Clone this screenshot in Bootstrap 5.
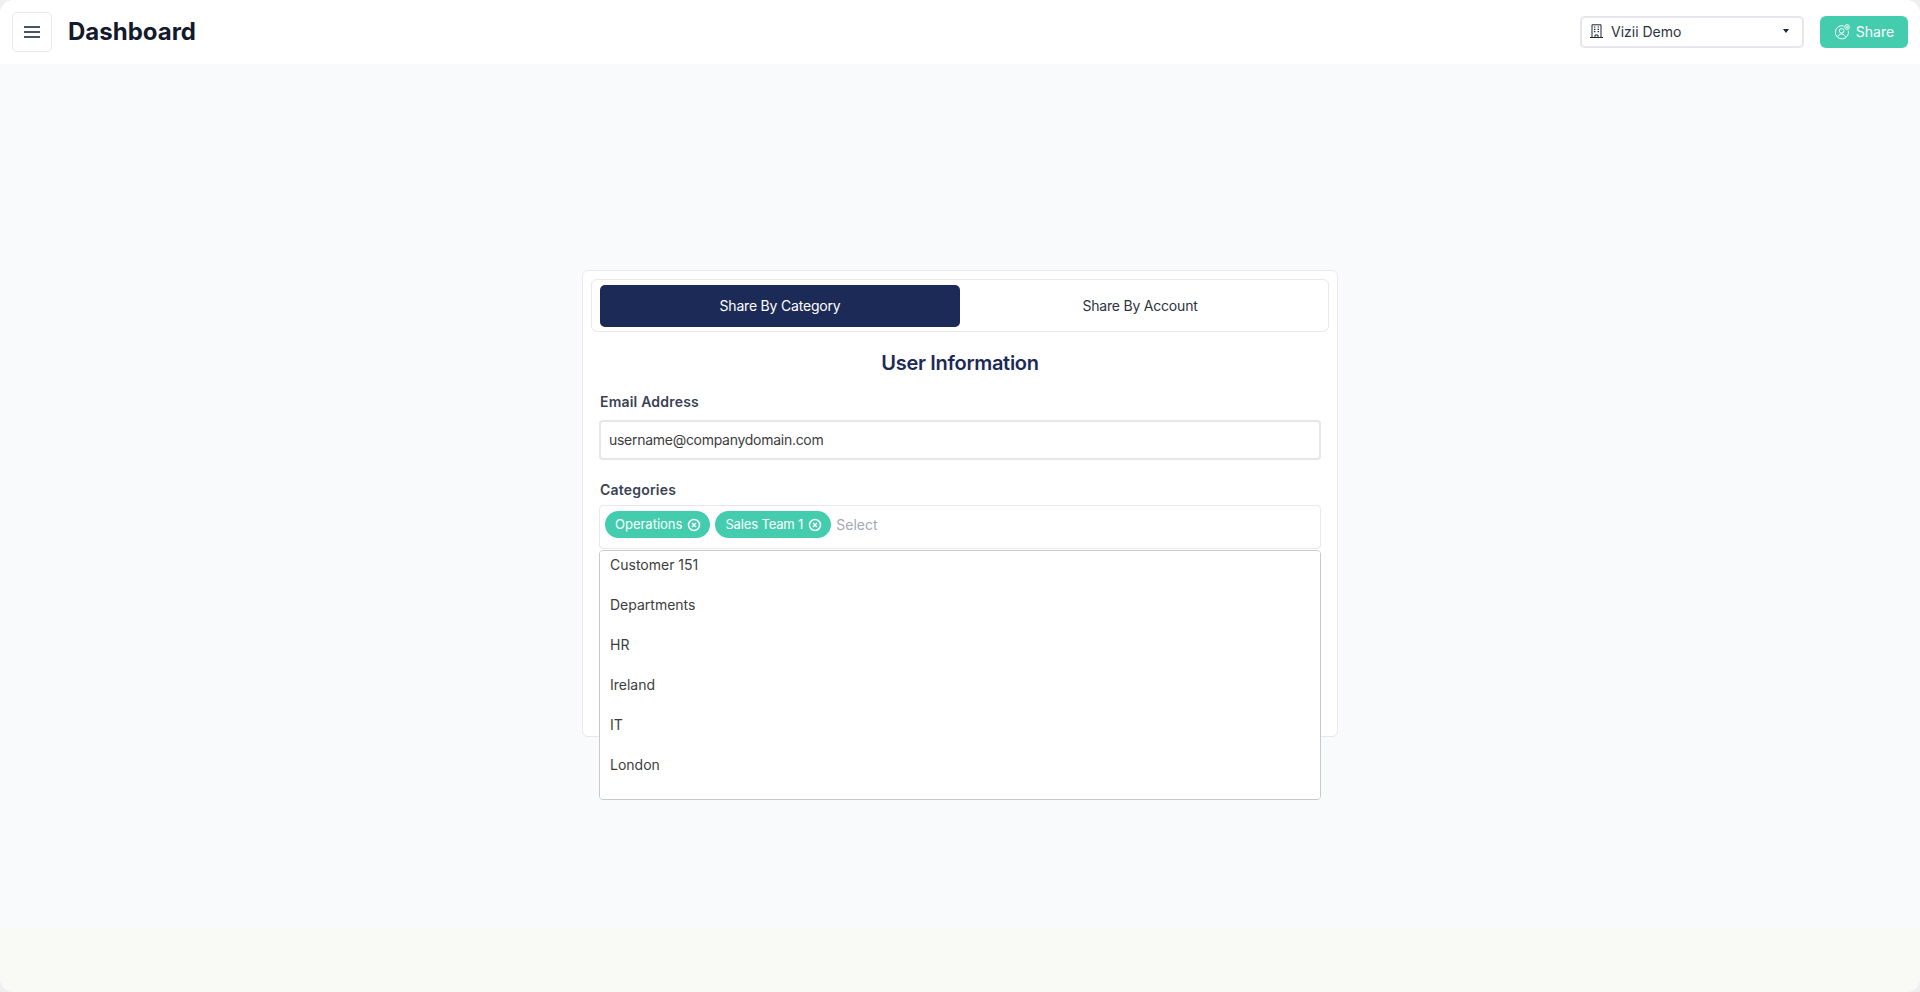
<!DOCTYPE html>
<html lang="en">
  <head>
    <meta charset="UTF-8" />
    <meta name="viewport" content="width=device-width, initial-scale=1.0" />
    <title>Dashboard</title>
    <link
      href="https://cdn.jsdelivr.net/npm/bootstrap@5.3.0/dist/css/bootstrap.min.css"
      rel="stylesheet"
    />
    <style>
      html,
      body {
        height: 100%;
        background: #efeff1;
      }

      body {
        font-family: Inter, "Liberation Sans", sans-serif;
        font-size: 14px;
        color: #2d3342;
        overflow: hidden;
      }

      .app-shell {
        height: 992px;
        border-radius: 14px;
        overflow: hidden;
        background: #f9fafc;
      }

      .top-bar {
        height: 64px;
        padding: 0 12px;
        background: #fff;
      }

      .menu-btn {
        width: 40px;
        height: 40px;
        padding: 0;
        border: 1px solid #e9e9ee;
        border-radius: 4px;
        background: #fff;
      }

      .page-title {
        margin: 0 0 0 16px;
        font-size: 24px;
        line-height: 32px;
        font-weight: 700;
        color: #131a2b;
      }

      .org-select {
        width: 224px;
        height: 32px;
        padding: 0 13px 2px 8px;
        border: 2px solid #e6e6ec;
        border-radius: 5px;
        background: #fff;
        color: #2d3342;
      }

      .org-select .org-name {
        margin-left: 8px;
      }

      .caret-down {
        width: 0;
        height: 0;
        border-left: 3.5px solid transparent;
        border-right: 3.5px solid transparent;
        border-top: 4px solid #1d2433;
      }

      .share-btn {
        width: 88px;
        height: 32px;
        margin-left: 16px;
        padding: 0 0 1px;
        gap: 6px;
        border: 0;
        border-radius: 6px;
        background: #43cdae;
        color: #fff;
        font-size: 14px;
      }

      .main-area {
        height: 863px;
        padding-top: 206px;
      }

      .share-panel {
        width: 756px;
        height: 467px;
        padding: 8px;
        border: 1px solid #e8e8ed;
        border-radius: 6px;
        background: #fff;
      }

      .tab-strip {
        height: 53px;
        padding: 5px 8px;
        border: 1px solid #e8e8ed;
        border-radius: 6px;
      }

      .tab-item {
        flex: 1;
        height: 42px;
        padding: 0 0 2px;
        border: 0;
        border-radius: 5px;
        background: transparent;
        color: #2d3342;
        font-size: 14px;
        letter-spacing: -0.2px;
      }

      .tab-item.is-active {
        background: #1c2a57;
        color: #fff;
      }

      .form-area {
        padding: 0 8px;
      }

      .panel-heading {
        margin: 19px 0 0;
        font-size: 20px;
        line-height: 24px;
        font-weight: 600;
        letter-spacing: -0.3px;
        color: #1c2a57;
        text-align: center;
      }

      .field-label {
        display: block;
        margin: 0 0 0 1px;
        font-weight: 600;
        line-height: 17px;
        letter-spacing: 0.2px;
        color: #3a4254;
      }

      .label-email {
        margin-top: 18px;
      }

      .email-input {
        height: 40px;
        margin-top: 10px;
        padding: 0 8px 2px;
        border: 2px solid #e6e6ec;
        border-radius: 4px;
        color: #3d3d3d;
        font-size: 14px;
        letter-spacing: -0.28px;
      }

      .label-categories {
        margin-top: 21px;
      }

      .tag-box {
        position: relative;
        height: 44px;
        margin-top: 7px;
        padding: 0 5px 5px;
        border: 1px solid #e8e8ed;
        border-radius: 4px;
        gap: 5px;
      }

      .tag-pill {
        height: 27px;
        padding: 0 9px 0 10px;
        gap: 5px;
        border-radius: 14px;
        background: #43cdae;
        color: #fff;
        font-size: 13px;
      }

      .tag-pill.is-tight {
        letter-spacing: -0.15px;
      }

      .tag-hint {
        color: #a5a8b5;
        font-size: 14px;
      }

      .tag-menu {
        position: absolute;
        top: 44px;
        left: -1px;
        right: -1px;
        height: 250px;
        overflow: hidden;
        border: 1px solid #c9c9c9;
        border-radius: 4px;
        background: #fff;
        z-index: 10;
      }

      .tag-menu .list-group {
        margin-top: -6px;
      }

      .tag-menu .list-group-item {
        height: 40px;
        padding: 0 10px;
        border: 0;
        line-height: 40px;
        color: #3d3d3d;
      }

      .foot-band {
        height: 65px;
        background: #f9faf5;
      }
    </style>
  </head>
  <body>
    <div class="app-shell d-flex flex-column">
      <header class="top-bar d-flex align-items-center flex-shrink-0">
        <button type="button" class="menu-btn d-flex align-items-center justify-content-center" aria-label="Menu">
          <svg width="16" height="12" viewBox="0 0 16 12">
            <path d="M0 1h16M0 6h16M0 11h16" stroke="#131a2b" stroke-width="1.6" fill="none" />
          </svg>
        </button>
        <h1 class="page-title">Dashboard</h1>

        <div class="org-select d-flex align-items-center ms-auto">
          <svg width="13" height="14" viewBox="0 0 13 14" fill="none" stroke="#1d2433" stroke-width="1">
            <path d="M0 13.5h13M2 13.5V.8h9v12.7M5 13.5v-2.5h3v2.5" />
            <path d="M4 3h1.4M7.6 3H9M4 5.3h1.4M7.6 5.3H9M4 7.6h1.4M7.6 7.6H9" stroke-width="1.2" />
          </svg>
          <span class="org-name">Vizii Demo</span>
          <span class="caret-down ms-auto"></span>
        </div>

        <button type="button" class="share-btn d-flex align-items-center justify-content-center">
          <svg width="16" height="16" viewBox="0 0 16 16" fill="none" stroke="#fff" stroke-width="1">
            <path d="M9.6 1.9A6.600 6.600 0 1 0 14.300 6.600" />
            <circle cx="7.600" cy="6.800" r="2.300" />
            <path d="M3.600 13c.7-2 2.200-3 4-3s3.300 1 4 3" />
            <circle cx="13" cy="3" r="2.300" />
            <path d="M12.200 2.200l1.600 1.600M13.800 2.200l-1.600 1.600" stroke-width=".8" />
          </svg>
          Share
        </button>
      </header>

      <main class="main-area d-flex justify-content-center flex-shrink-0">
        <div class="share-panel">
          <div class="tab-strip d-flex">
            <button type="button" class="tab-item is-active">Share By Category</button>
            <button type="button" class="tab-item">Share By Account</button>
          </div>

          <div class="form-area">
            <h2 class="panel-heading">User Information</h2>

            <label class="field-label label-email" for="emailAddress">Email Address</label>
            <input id="emailAddress" type="text" class="form-control email-input shadow-none" value="username@companydomain.com" />

            <label class="field-label label-categories">Categories</label>
            <div class="tag-box d-flex align-items-center">
              <span class="tag-pill d-inline-flex align-items-center">
                Operations
                <svg width="14" height="14" viewBox="0 0 14 14" fill="none" stroke="#fff">
                  <circle cx="7" cy="7" r="5.500" stroke-width="1.500" />
                  <path d="M5 5l4 4M9 5l-4 4" stroke-width="1.500" />
                </svg>
              </span>
              <span class="tag-pill is-tight d-inline-flex align-items-center">
                Sales Team 1
                <svg width="14" height="14" viewBox="0 0 14 14" fill="none" stroke="#fff">
                  <circle cx="7" cy="7" r="5.500" stroke-width="1.500" />
                  <path d="M5 5l4 4M9 5l-4 4" stroke-width="1.500" />
                </svg>
              </span>
              <span class="tag-hint">Select</span>

              <div class="tag-menu">
                <div class="list-group list-group-flush">
                  <div class="list-group-item">Customer 151</div>
                  <div class="list-group-item">Departments</div>
                  <div class="list-group-item">HR</div>
                  <div class="list-group-item">Ireland</div>
                  <div class="list-group-item">IT</div>
                  <div class="list-group-item">London</div>
                  <div class="list-group-item">Marketing</div>
                </div>
              </div>
            </div>
          </div>
        </div>
      </main>

      <footer class="foot-band flex-shrink-0"></footer>
    </div>

    <script src="https://cdn.jsdelivr.net/npm/bootstrap@5.3.0/dist/js/bootstrap.bundle.min.js"></script>
  </body>
</html>
